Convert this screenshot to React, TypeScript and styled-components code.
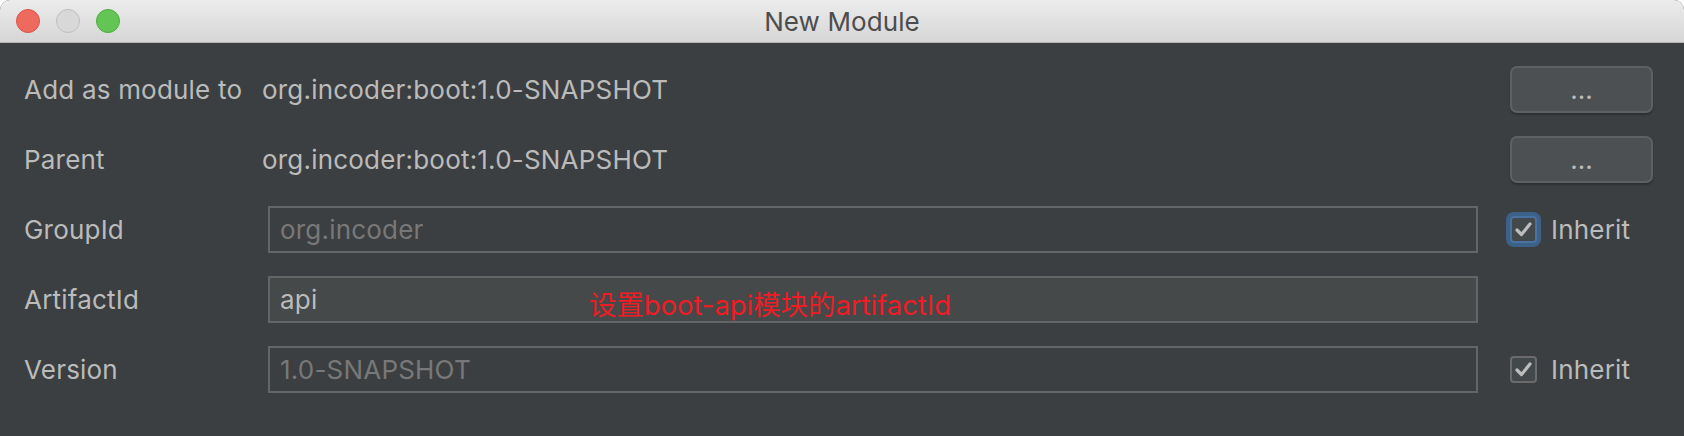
import React from 'react';
import styled, { createGlobalStyle } from 'styled-components';

const GlobalStyle = createGlobalStyle`
  html, body {
    margin: 0;
    padding: 0;
    background: #ffffff;
  }
  body {
    font-family: Inter, "Noto Sans", "Noto Sans CJK SC", sans-serif;
    -webkit-font-smoothing: antialiased;
  }
`;

const Window = styled.div`
  width: 1684px;
  height: 436px;
  display: flex;
  flex-direction: column;
  border-radius: 10px 10px 0 0;
  overflow: hidden;
  background: #3c3f41;
  box-sizing: border-box;
`;

const TitleBar = styled.div`
  position: relative;
  height: 42px;
  flex-shrink: 0;
  display: flex;
  align-items: center;
  justify-content: center;
  background: linear-gradient(#ececec, #d6d6d6);
  border-bottom: 1px solid #b4b4b4;
`;

const Lights = styled.div`
  position: absolute;
  left: 16px;
  top: 9px;
  display: flex;
  gap: 16px;
`;

const Light = styled.span<{ $fill: string; $edge: string }>`
  width: 24px;
  height: 24px;
  border-radius: 50%;
  box-sizing: border-box;
  background: ${({ $fill }) => $fill};
  border: 1px solid ${({ $edge }) => $edge};
`;

const Title = styled.div`
  font-size: 26px;
  color: #4d4d4d;
  letter-spacing: 0.1px;
`;

const Form = styled.div`
  display: grid;
  grid-template-columns: 238px 1fr 143px;
  grid-auto-rows: 47px;
  row-gap: 23px;
  padding: 23px 31px 0 24px;
  font-size: 26px;
  letter-spacing: 0.2px;
  color: #bbbbbb;
`;

const Label = styled.div`
  display: flex;
  align-items: center;
  white-space: nowrap;
`;

const Value = styled.div`
  display: flex;
  align-items: center;
  white-space: nowrap;
`;

const Field = styled.div<{ $enabled?: boolean }>`
  position: relative;
  margin: 0 32px 0 6px;
  display: flex;
  align-items: center;
  padding: 0 10px;
  box-sizing: border-box;
  border: 2px solid #646566;
  background: ${({ $enabled }) => ($enabled ? '#45494a' : 'transparent')};
  color: ${({ $enabled }) => ($enabled ? '#bbbbbb' : '#787878')};
`;

const Note = styled.span`
  position: absolute;
  left: 319px;
  top: 5px;
  font-family: Inter, "Noto Sans CJK SC", sans-serif;
  font-size: 27.4px;
  letter-spacing: 0;
  color: #ee1c25;
  white-space: nowrap;
`;

const DotsButton = styled.button`
  width: 143px;
  height: 47px;
  box-sizing: border-box;
  border: 2px solid #5e6163;
  border-radius: 7px;
  background: #4c5052;
  box-shadow: 0 2px 2px rgba(0, 0, 0, 0.25);
  color: #bbbbbb;
  font-family: inherit;
  font-size: 26px;
  padding: 0;
  display: flex;
  align-items: center;
  justify-content: center;
`;

const CheckRow = styled.label`
  display: flex;
  align-items: center;
  gap: 14px;
  white-space: nowrap;
`;

const Box = styled.span<{ $focused?: boolean }>`
  width: 27px;
  height: 27px;
  box-sizing: border-box;
  border-radius: 4px;
  display: flex;
  align-items: center;
  justify-content: center;
  background: #43494a;
  border: 2px solid ${({ $focused }) => ($focused ? '#4a72a0' : '#6b6b6b')};
  box-shadow: ${({ $focused }) => ($focused ? '0 0 0 4px #3d6289' : 'none')};
`;

function Check({ focused }: { focused?: boolean }) {
  return (
    <CheckRow>
      <Box $focused={focused}>
        <svg width="19" height="19" viewBox="0 0 19 19">
          <path
            d="M3 10 L7.5 14.5 L16 4"
            fill="none"
            stroke="#bdbdbd"
            strokeWidth="3.2"
            strokeLinecap="round"
            strokeLinejoin="round"
          />
        </svg>
      </Box>
      Inherit
    </CheckRow>
  );
}

export default function App() {
  return (
    <>
      <GlobalStyle />
      <Window>
        <TitleBar>
          <Lights>
            <Light $fill="#ee6a5f" $edge="#d8544b" />
            <Light $fill="#d8d8d8" $edge="#bdbdbd" />
            <Light $fill="#62c554" $edge="#4fa941" />
          </Lights>
          <Title>New Module</Title>
        </TitleBar>

        <Form>
          <Label>Add as module to</Label>
          <Value>org.incoder:boot:1.0-SNAPSHOT</Value>
          <DotsButton type="button">...</DotsButton>

          <Label>Parent</Label>
          <Value>org.incoder:boot:1.0-SNAPSHOT</Value>
          <DotsButton type="button">...</DotsButton>

          <Label>GroupId</Label>
          <Field>org.incoder</Field>
          <Check focused />

          <Label>ArtifactId</Label>
          <Field $enabled>
            api
            <Note>设置boot-api模块的artifactId</Note>
          </Field>
          <div />

          <Label>Version</Label>
          <Field>1.0-SNAPSHOT</Field>
          <Check />
        </Form>
      </Window>
    </>
  );
}
